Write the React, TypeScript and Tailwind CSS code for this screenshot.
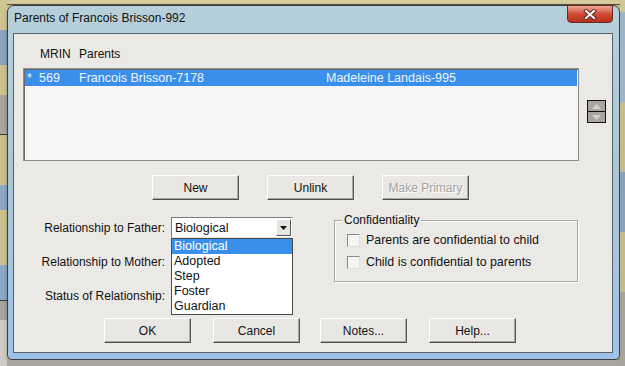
import React from 'react';

const font = { fontFamily: '"Liberation Sans", Arial, sans-serif' };

function Btn({ label, disabled }: { label: string; disabled?: boolean }) {
  return (
    <div className="w-[87px] h-[25px] flex items-center justify-center bg-[#e9e7e3] border border-t-[#fdfdfd] border-l-[#fdfdfd] border-r-[#5b5b5b] border-b-[#4a4a4a] shadow-[inset_-1px_-1px_0_#a7a5a1]">
      <span className={disabled ? 'text-[#a4a29e] [text-shadow:1px_1px_0_#ffffff]' : 'text-[#111]'}>{label}</span>
    </div>
  );
}

function Checkbox({ label }: { label: string }) {
  return (
    <div className="flex items-center h-[13px] gap-[6px]">
      <div className="w-[13px] h-[13px] bg-[#f6f5f3] border border-t-[#8a8a8a] border-l-[#8a8a8a] border-r-[#e2e0dc] border-b-[#e2e0dc]" />
      <span className="leading-[13px] text-[12.4px]">{label}</span>
    </div>
  );
}

const relations = ['Biological', 'Adopted', 'Step', 'Foster', 'Guardian'];

export default function App() {
  return (
    <div className="flex w-[625px] h-[366px] overflow-hidden bg-[#cdc293] text-[12px] text-[#111]" style={font}>
      {/* backdrop strip on the left */}
      <div className="w-[7px] flex flex-col">
        <div className="h-[30px] bg-[#cfc392]" />
        <div className="h-[35px] bg-[#8aa3bf]" />
        <div className="h-[30px] bg-[#cdc190]" />
        <div className="h-[40px] bg-[#a9a6a0] border-b border-[#3a3a3a]" />
        <div className="h-[50px] bg-[#cbbf8d]" />
        <div className="h-[25px] bg-[#8ea7c6]" />
        <div className="h-[55px] bg-[#cdc190]" />
        <div className="h-[35px] bg-[#8ea7c6]" />
        <div className="h-[20px] bg-[#a8a5a0] border-t border-[#3a3a3a]" />
        <div className="flex-1 bg-[#cfcbc3]" />
      </div>

      <div className="w-[613px] flex flex-col">
        <div className="h-[5px] bg-[#d6cb9b] border-b border-[#5a5136]" />

        {/* window */}
        <div className="w-[613px] h-[355px] flex flex-col rounded-t-[7px] rounded-b-[5px] border border-[#3a3f45] bg-gradient-to-b from-[#b6d0db] via-[#aac7d6] to-[#9ec2ea] shadow-[1px_2px_4px_rgba(0,0,0,0.45)]">
          <div className="relative h-[27px] pl-[6px] pt-[5px] leading-[14px] text-[#111]">
            Parents of Francois Brisson-992
            <div className="absolute top-[-1px] right-[6px] w-[46px] h-[18px] rounded-b-[4px] border border-[#6b2a20] bg-gradient-to-b from-[#e9a899] via-[#cf4a33] to-[#b8301c] flex items-center justify-center">
              <svg width="14" height="11" viewBox="0 0 14 11">
                <path d="M3 2 L11 9 M11 2 L3 9" stroke="#5a2a22" strokeWidth="4" strokeLinecap="square" />
                <path d="M3 2 L11 9 M11 2 L3 9" stroke="#ffffff" strokeWidth="2" strokeLinecap="square" />
              </svg>
            </div>
          </div>

          <div className="flex-1 pl-[5px] pr-[6px] pb-[6px]">
            <div className="h-full bg-[#ebe9e6] border border-[#56616b] flex flex-col">
              {/* list header */}
              <div className="mt-[13px] h-[14px] pl-[26px] flex leading-[14px]">
                <span className="w-[39px]">MRIN</span>
                <span>Parents</span>
              </div>

              <div className="mt-[7px] flex">
                <div className="ml-[9px] w-[556px] h-[93px] bg-[#f6f5f3] border border-[#8d8d8d] shadow-[inset_1px_1px_0_#6a6a6a]">
                  <div className="mt-[1px] ml-[1px] mr-[1px] h-[16px] bg-[#3a8fea] text-[#eef5ff] text-[12.5px] flex items-center leading-[16px]">
                    <span className="w-[14px] pl-[2px]">*</span>
                    <span className="w-[40px]">569</span>
                    <span className="w-[247px]">Francois Brisson-7178</span>
                    <span>Madeleine Landais-995</span>
                  </div>
                </div>
                <div className="ml-[8px] mt-[32px] w-[19px] h-[23px] border border-[#111] bg-[#111] flex flex-col gap-[1px]">
                  <div className="flex-1 bg-[#aaa59e] flex items-center justify-center">
                    <svg width="9" height="5" viewBox="0 0 9 5"><path d="M0 5 L4.5 0 L9 5 Z" fill="#d4d0ca" /></svg>
                  </div>
                  <div className="flex-1 bg-[#aaa59e] flex items-center justify-center">
                    <svg width="9" height="5" viewBox="0 0 9 5"><path d="M0 0 L9 0 L4.5 5 Z" fill="#d4d0ca" /></svg>
                  </div>
                </div>
              </div>

              <div className="mt-[14px] pl-[138px] flex gap-[28px]">
                <Btn label="New" />
                <Btn label="Unlink" />
                <Btn label="Make Primary" disabled />
              </div>

              <div className="mt-[17px] flex">
                <div className="flex flex-col gap-[13px]">
                  <div className="flex items-center h-[21px]">
                    <span className="w-[152px] text-right pr-[1px]">Relationship to Father:</span>
                    <div className="relative ml-[5px] w-[122px] h-[21px] bg-white border border-t-[#7c7c7c] border-l-[#7c7c7c] border-r-[#e6e4e0] border-b-[#e6e4e0] flex items-center">
                      <span className="pl-[3px] flex-1 leading-[14px] text-[12.5px]">Biological</span>
                      <div className="mr-[1px] w-[15px] h-[17px] bg-[#e6e4e0] border border-t-white border-l-white border-r-[#555] border-b-[#555] flex items-center justify-center">
                        <svg width="7" height="4" viewBox="0 0 7 4"><path d="M0 0 L7 0 L3.5 4 Z" fill="#111" /></svg>
                      </div>
                      <div className="absolute left-[-1px] top-[20px] w-[122px] bg-white border border-[#4a4a4a] z-10 text-[12.5px]">
                        {relations.map((r, i) => (
                          <div key={r} className={`h-[15px] leading-[15px] pl-[2px] ${i === 0 ? 'bg-[#3a8fea] text-white' : ''}`}>
                            {r}
                          </div>
                        ))}
                      </div>
                    </div>
                  </div>
                  <div className="flex items-center h-[21px]">
                    <span className="w-[152px] text-right pr-[1px]">Relationship to Mother:</span>
                  </div>
                  <div className="flex items-center h-[21px]">
                    <span className="w-[152px] text-right pr-[1px]">Status of Relationship:</span>
                  </div>
                </div>

                <div className="relative ml-[41px] mt-[3px] w-[244px] h-[62px] border border-[#a8a6a2] shadow-[inset_1px_1px_0_#ffffff,1px_1px_0_#ffffff] pt-[13px] pl-[12px] flex flex-col gap-[9px]">
                  <span className="absolute top-[-8px] left-[7px] px-[2px] bg-[#ebe9e6] leading-[14px]">Confidentiality</span>
                  <Checkbox label="Parents are confidential to child" />
                  <Checkbox label="Child is confidential to parents" />
                </div>
              </div>

              <div className="mt-[12px] pl-[90px] flex">
                <Btn label="OK" />
                <div className="ml-[22px]"><Btn label="Cancel" /></div>
                <div className="ml-[20px]"><Btn label="Notes..." /></div>
                <div className="ml-[22px]"><Btn label="Help..." /></div>
              </div>
            </div>
          </div>
        </div>

        <div className="flex-1 bg-[#a9a59c]" />
      </div>

      {/* backdrop strip on the right */}
      <div className="w-[5px] flex flex-col">
        <div className="h-[12px] bg-[#d2c697]" />
        <div className="h-[90px] bg-[#9fb3c6]" />
        <div className="h-[70px] bg-[#c6bb8f]" />
        <div className="h-[60px] bg-[#8a9fb8]" />
        <div className="h-[60px] bg-[#c5ba8c]" />
        <div className="flex-1 bg-[#a8a49c]" />
      </div>
    </div>
  );
}
